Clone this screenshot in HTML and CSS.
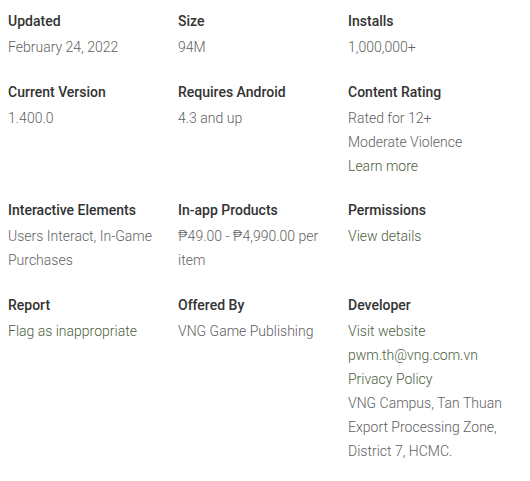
FILE: index.html
```html
<!DOCTYPE html>
<html>
<head>
<meta charset="utf-8">
<link rel="stylesheet" href="styles.css">
</head>
<body>
<div class="grid">
  <div class="item"><div class="label">Updated</div><div class="value">February 24, 2022</div></div>
  <div class="item"><div class="label">Size</div><div class="value">94M</div></div>
  <div class="item"><div class="label">Installs</div><div class="value">1,000,000+</div></div>

  <div class="item"><div class="label">Current Version</div><div class="value">1.400.0</div></div>
  <div class="item"><div class="label">Requires Android</div><div class="value">4.3 and up</div></div>
  <div class="item"><div class="label">Content Rating</div><div class="value">Rated for 12+<br>Moderate Violence<br><a class="link" href="#">Learn more</a></div></div>

  <div class="item"><div class="label">Interactive Elements</div><div class="value">Users Interact, In-Game Purchases</div></div>
  <div class="item"><div class="label">In-app Products</div><div class="value">₱49.00 - ₱4,990.00 per item</div></div>
  <div class="item"><div class="label">Permissions</div><div class="value"><a class="link" href="#">View details</a></div></div>

  <div class="item"><div class="label">Report</div><div class="value"><a class="link" href="#">Flag as inappropriate</a></div></div>
  <div class="item"><div class="label">Offered By</div><div class="value">VNG Game Publishing</div></div>
  <div class="item"><div class="label">Developer</div><div class="value"><a class="link" href="#">Visit website</a><br><a class="link" href="#">pwm.th@vng.com.vn</a><br><a class="link" href="#">Privacy Policy</a><br>VNG Campus, Tan Thuan Export Processing Zone, District 7, HCMC.</div></div>
</div>
</body>
</html>
```
FILE: styles.css
```css
html, body { background: #fff; }
body {
  margin: 9px 8px 8px 8px;
  font-family: Roboto, "Liberation Sans", sans-serif;
  font-size: 14px;
}
.grid {
  display: grid;
  grid-template-columns: 170px 170px 170px;
  row-gap: 20.5px;
}
.item { padding-right: 8px; }
.label {
  font-weight: 500;
  color: #333;
  line-height: 24px;
  margin-bottom: 2px;
}
.value {
  color: #616161;
  font-weight: 300;
  line-height: 24px;
}
.link {
  color: #4b5e3c;
  text-decoration: none;
}
```
